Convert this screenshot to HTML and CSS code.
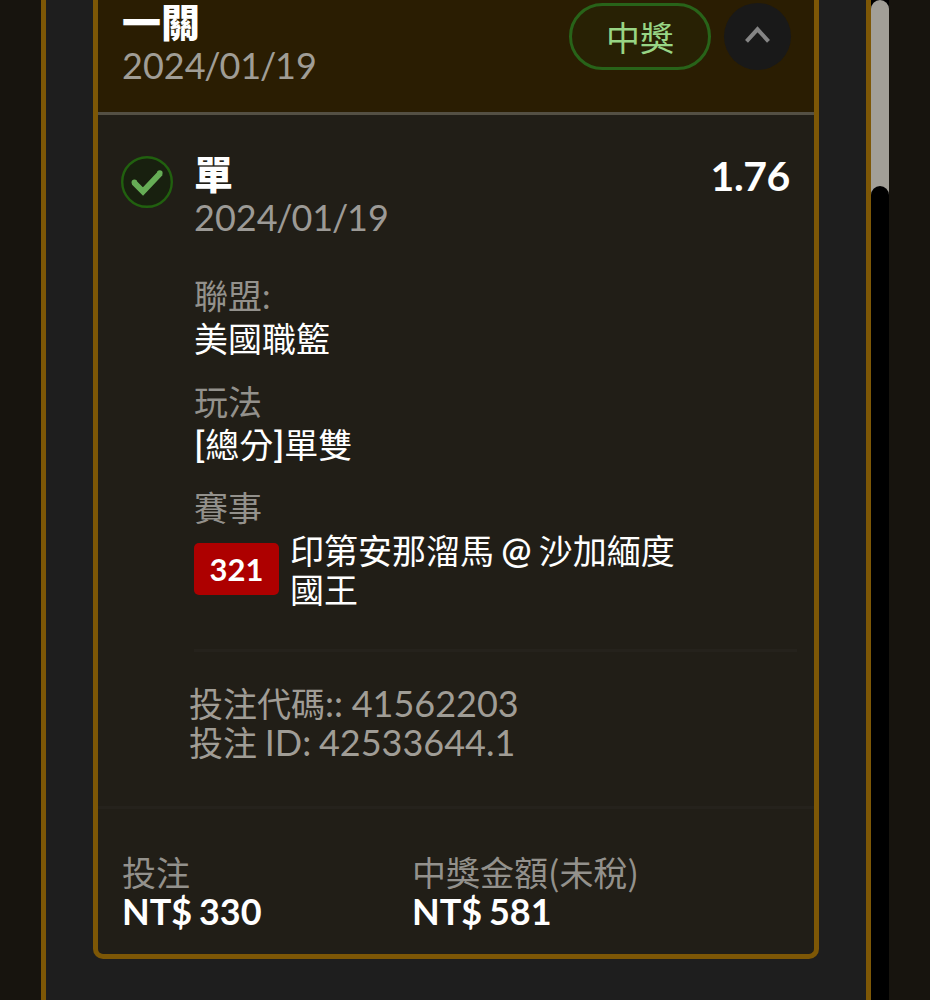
FILE: index.html
```html
<!DOCTYPE html>
<html lang="zh-Hant">
<head>
<meta charset="utf-8">
<title>投注紀錄</title>
<link rel="stylesheet" href="styles.css">
</head>
<body>
<div class="screen">
  <main class="panel">
    <article class="ticket">
      <header class="ticket-head">
        <div class="head-text">
          <h1 class="title">一關</h1>
          <p class="date">2024<span class="slash">/</span>01<span class="slash">/</span>19</p>
        </div>
        <span class="status">中獎</span>
        <button class="toggle" aria-label="收合">
          <svg width="67" height="67" viewBox="0 0 67 67"><path d="M22.5 38.3 33.5 26.3 44.5 38.3" fill="none" stroke="#858585" stroke-width="4"/></svg>
        </button>
      </header>
      <section class="selection">
        <svg class="check" width="52" height="52" viewBox="0 0 52 52"><circle cx="26" cy="26" r="24.8" fill="#18200f" stroke="#21600f" stroke-width="2.4"/><path d="M13 26.5 22 35.5 39.5 17" fill="none" stroke="#66ad56" stroke-width="6"/><circle cx="13.4" cy="26.4" r="2.8" fill="#66ad56"/><circle cx="38.8" cy="17" r="2.8" fill="#66ad56"/></svg>
        <div class="pick">
          <div class="pick-head"><h2 class="title">單</h2><span class="odds">1.76</span></div>
          <p class="date">2024<span class="slash">/</span>01<span class="slash">/</span>19</p>
          <dl class="details">
            <dt>聯盟:</dt>
            <dd>美國職籃</dd>
            <dt>玩法</dt>
            <dd><span class="lat">[</span>總分<span class="lat">]</span>單雙</dd>
            <dt>賽事</dt>
            <dd class="match"><span class="code">321</span><span class="teams">印第安那溜馬 <span class="lat">@</span> 沙加緬度<br>國王</span></dd>
          </dl>
          <div class="refs">
            <p class="bet-code"><span class="zh">投注代碼</span>:: 41562203</p>
            <p class="bet-id"><span class="zh">投注</span> ID: 42533644.1</p>
          </div>
        </div>
      </section>
      <footer class="totals">
        <div class="total"><p class="label">投注</p><p class="amount">NT$ 330</p></div>
        <div class="total"><p class="label">中獎金額<span class="paren">(</span>未稅<span class="paren">)</span></p><p class="amount">NT$ 581</p></div>
      </footer>
    </article>
  </main>
  <div class="scroll"><div class="thumb"></div></div>
</div>
</body>
</html>
```
FILE: styles.css
```css
* { box-sizing: border-box; margin: 0; padding: 0; }
body { background: #17140e; overflow: hidden; }
.screen {
  display: flex;
  width: 930px;
  height: 1000px;
  padding-left: 41px;
  overflow: hidden;
  font-family: Lato, "Noto Sans CJK TC", sans-serif;
  font-size: 36px;
  line-height: 40px;
  color: #fff;
  white-space: nowrap;
}
.panel {
  width: 830px;
  height: 1000px;
  padding: 0 46px 0 47px;
  background: #1e1e1e;
  border: solid #7d5706;
  border-width: 0 5px;
}
.ticket {
  width: 726px;
  height: 959px;
  background: #211e17;
  border: 5px solid #7d5706;
  border-top: 0;
  border-radius: 0 0 10px 10px;
}
.ticket-head {
  display: flex;
  height: 115px;
  padding: 3px 23px 0 24px;
  background: #2a1d02;
  border-bottom: 3px solid #545044;
}
.head-text { flex: 1; }
.title { height: 42px; font-size: 39px; font-weight: 900; line-height: 38px; }
.date { color: #a09d96; }
.pick .date { color: #9c9a96; }
.slash { letter-spacing: -1.2px; margin-left: -1.2px; }
.status {
  width: 142px;
  height: 67px;
  border: 3px solid #286319;
  border-radius: 34px;
  background: #282104;
  color: #98d585;
  font-size: 34px;
  line-height: 64px;
  text-align: center;
}
.toggle {
  width: 67px;
  height: 67px;
  margin-left: 13px;
  border: 0;
  border-radius: 50%;
  background: #191919;
}
.toggle svg { display: block; }
.selection {
  display: flex;
  height: 694px;
  padding: 40px 17px 0 23px;
  border-bottom: 3px solid #25221c;
}
.check { flex: none; margin-top: 0.5px; }
.pick { flex: 1; padding-left: 21px; }
.pick-head { display: flex; justify-content: space-between; height: 42px; }
.odds { padding-right: 7px; font-size: 41px; font-weight: 700; line-height: 42px; letter-spacing: -0.4px; }
.details { height: 415px; padding-top: 39px; font-size: 34px; border-bottom: 3px solid #25221c; }
.details dt { color: #93918c; height: 43px; }
.details dd { height: 63px; }
.lat { font-size: 36px; font-weight: 600; line-height: 0; }
.zh { font-size: 34px; line-height: 0; }
.details .match { display: flex; height: 80px; }
.code {
  width: 85px;
  height: 52px;
  margin-top: 12px;
  border-radius: 5px;
  background: #ad0000;
  font-size: 31px;
  font-weight: 700;
  line-height: 52px;
  text-align: center;
}
.teams { padding-left: 11px; line-height: 39px; word-spacing: -1.5px; }
.refs { margin: 32px 0 0 -5px; line-height: 39px; color: #a09d96; }
.bet-code { word-spacing: -0.5px; }
.bet-id { word-spacing: -1.5px; }
.totals { display: grid; grid-template-columns: 290px 1fr; padding: 44px 0 0 24px; line-height: 39px; }
.label { height: 39px; color: #93918c; font-size: 34px; }
.paren { font-family: "Noto Sans CJK TC", sans-serif; line-height: 0; }
.amount { font-weight: 700; word-spacing: -1.5px; letter-spacing: -0.1px; }
.scroll { width: 18px; height: 1000px; background: #000; }
.thumb { position: relative; height: 196px; border-radius: 9px 9px 0 0; background: #a29f97; }
.thumb::after {
  content: "";
  position: absolute;
  left: 0;
  bottom: 0;
  width: 18px;
  height: 10px;
  border-radius: 9px 9px 0 0;
  background: #000;
}
```
